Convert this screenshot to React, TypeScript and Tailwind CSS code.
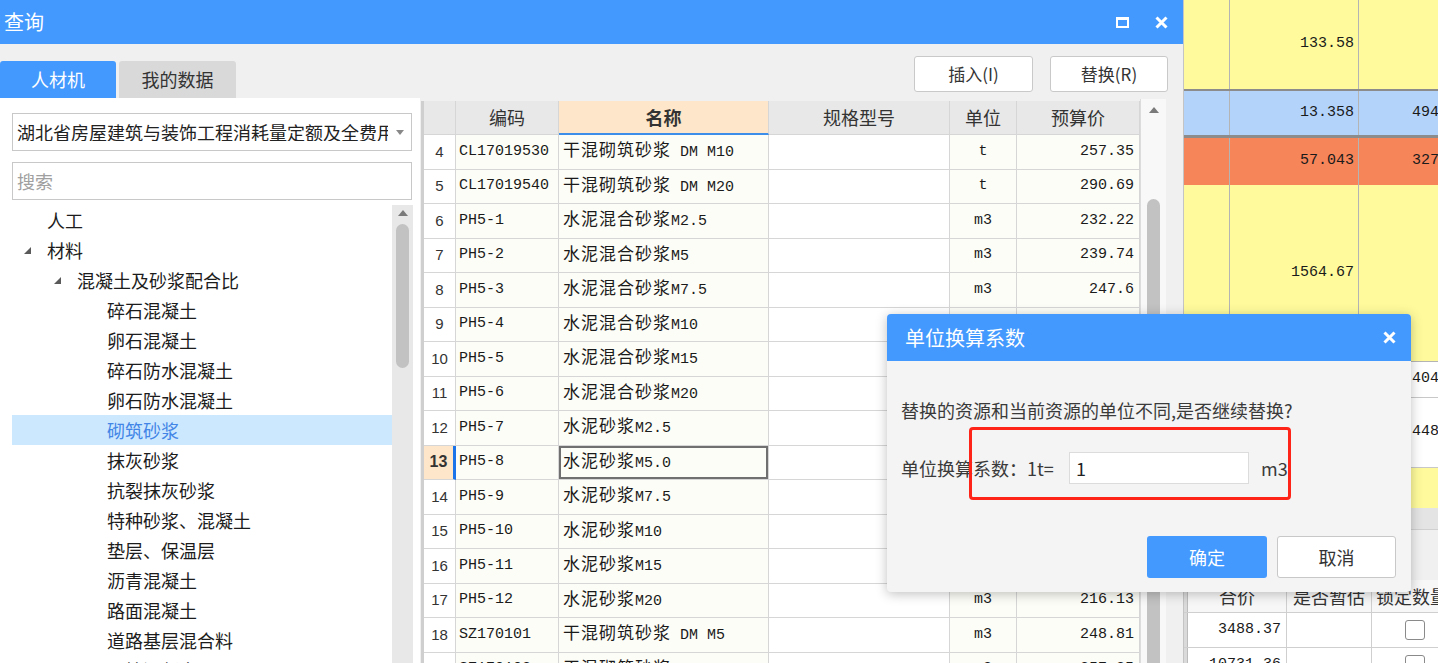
import React from 'react';

const rows: [number, string, string, string, string][] = [
    [4, 'CL17019530', '干混砌筑砂浆 DM M10', 't', '257.35'],
    [5, 'CL17019540', '干混砌筑砂浆 DM M20', 't', '290.69'],
    [6, 'PH5-1', '水泥混合砂浆M2.5', 'm3', '232.22'],
    [7, 'PH5-2', '水泥混合砂浆M5', 'm3', '239.74'],
    [8, 'PH5-3', '水泥混合砂浆M7.5', 'm3', '247.6'],
    [9, 'PH5-4', '水泥混合砂浆M10', 'm3', '256.41'],
    [10, 'PH5-5', '水泥混合砂浆M15', 'm3', '268.36'],
    [11, 'PH5-6', '水泥混合砂浆M20', 'm3', '281.63'],
    [12, 'PH5-7', '水泥砂浆M2.5', 'm3', '195.57'],
    [13, 'PH5-8', '水泥砂浆M5.0', 'm3', '199.15'],
    [14, 'PH5-9', '水泥砂浆M7.5', 'm3', '203.71'],
    [15, 'PH5-10', '水泥砂浆M10', 'm3', '208.47'],
    [16, 'PH5-11', '水泥砂浆M15', 'm3', '212.39'],
    [17, 'PH5-12', '水泥砂浆M20', 'm3', '216.13'],
    [18, 'SZ170101', '干混砌筑砂浆 DM M5', 'm3', '248.81'],
    [19, 'SZ170102', '干混砌筑砂浆 DM M10', 'm3', '257.35'],
];

const tree: { t: string; l: 0 | 1 | 2; open?: boolean; sel?: boolean }[] = [
    { t: '人工', l: 0 },
    { t: '材料', l: 0, open: true },
    { t: '混凝土及砂浆配合比', l: 1, open: true },
    { t: '碎石混凝土', l: 2 },
    { t: '卵石混凝土', l: 2 },
    { t: '碎石防水混凝土', l: 2 },
    { t: '卵石防水混凝土', l: 2 },
    { t: '砌筑砂浆', l: 2, sel: true },
    { t: '抹灰砂浆', l: 2 },
    { t: '抗裂抹灰砂浆', l: 2 },
    { t: '特种砂浆、混凝土', l: 2 },
    { t: '垫层、保温层', l: 2 },
    { t: '沥青混凝土', l: 2 },
    { t: '路面混凝土', l: 2 },
    { t: '道路基层混合料', l: 2 },
    { t: '预拌混凝土', l: 2 },
];

const indent = { 0: 'pl-[12px]', 1: 'pl-[42px]', 2: 'pl-[72px]' };

// SimSun-like cells: latin in mono, CJK runs slightly larger
function Mixed({ text }: { text: string }) {
    const parts = text.split(/([\u3000-\u9fff\uff00-\uffef]+)/);
    return (
        <span className="whitespace-pre">
            {parts.map((p, i) =>
                /[\u3000-\u9fff]/.test(p) ? (
                    <span key={i} className="text-[17px] tracking-[1px]">{p}</span>
                ) : (
                    <span key={i}>{p}</span>
                )
            )}
        </span>
    );
}

function CloseIcon() {
    return (
        <svg width="13" height="13" viewBox="0 0 13 13">
            <path d="M1.5 1.5L11.5 11.5M11.5 1.5L1.5 11.5" stroke="white" strokeWidth="3" />
        </svg>
    );
}

function Expander() {
    return (
        <svg width="7" height="7" viewBox="0 0 7 7">
            <polygon points="7,0 7,7 0,7" fill="#5a5a5a" />
        </svg>
    );
}

function UpArrow() {
    return (
        <svg width="10" height="6" viewBox="0 0 10 6">
            <polygon points="5,0 10,6 0,6" fill="#7a7a7a" />
        </svg>
    );
}

function LeftPanel() {
    return (
        <div className="w-[420px] shrink-0 bg-white flex flex-col pl-[12px] pt-[15px] min-h-0">
            <div className="w-[400px] h-[38px] border border-[#c8c8c8] flex items-center pl-[4px]">
                <span className="w-[371px] overflow-hidden whitespace-nowrap text-[18px] leading-none text-[#222]">
                    湖北省房屋建筑与装饰工程消耗量定额及全费用基价表
                </span>
                <svg width="8" height="5" viewBox="0 0 8 5" className="ml-[8px]">
                    <polygon points="0,0 8,0 4,5" fill="#888" />
                </svg>
            </div>
            <div className="mt-[11px] w-[400px] h-[38px] border border-[#c8c8c8] flex items-center pl-[4px]">
                <span className="text-[18px] leading-none text-[#a0a0a0]">搜索</span>
            </div>
            <div className="mt-[5px] w-[401px] flex flex-1 min-h-0">
                <div className="flex-1 flex flex-col overflow-hidden">
                    {tree.map((n) => (
                        <div
                            key={n.t}
                            className={`h-[30px] shrink-0 flex items-center ${indent[n.l]} ${n.sel ? 'bg-[#cce8ff] text-[#4285e6]' : 'text-[#1c1c1c]'}`}
                        >
                            <span className="w-[23px] flex items-center">{n.open && <Expander />}</span>
                            <span className="text-[18px] leading-none whitespace-nowrap">{n.t}</span>
                        </div>
                    ))}
                </div>
                <div className="w-[21px] bg-[#e8e8e8] flex flex-col items-center">
                    <div className="mt-[5px]"><UpArrow /></div>
                    <div className="mt-[8px] w-[13px] h-[144px] rounded-full bg-[#c2c2c2]" />
                </div>
            </div>
        </div>
    );
}

function DataTable() {
    const cell = 'border-r border-b border-[#d6d6d6] flex items-center';
    return (
        <div className="ml-[1px] mt-[3px] w-[719px] border-l-[3px] border-[#cfcfcf] flex flex-col overflow-hidden font-['Liberation_Mono','Noto_Sans_CJK_SC',monospace] text-[15px] text-[#1a1a1a]">
            <div className="flex h-[34px] shrink-0 bg-[#e8e8e8] font-['Noto_Sans_CJK_SC',sans-serif] text-[18px] text-[#333]">
                <div className={`${cell} w-[32px]`} />
                <div className={`${cell} w-[103px] justify-center`}>编码</div>
                <div className="w-[210px] border-r border-b-2 border-r-[#d6d6d6] border-b-[#3d8ee8] bg-[#fde6c9] flex items-center justify-center font-bold">名称</div>
                <div className={`${cell} w-[181px] justify-center`}>规格型号</div>
                <div className={`${cell} w-[67px] justify-center`}>单位</div>
                <div className={`${cell} w-[123px] justify-center`}>预算价</div>
            </div>
            {rows.map(([n, code, name, unit, price]) => {
                const sel = n === 13;
                return (
                    <div key={n} className="flex h-[34.5px] shrink-0">
                        <div
                            className={`${cell} w-[32px] justify-center font-['Liberation_Sans',sans-serif] text-[#333] ${sel ? 'bg-[#fde6c9] font-bold text-[16px] border-r-[3px] border-r-[#1a73e8]' : 'bg-white'}`}
                        >
                            {n}
                        </div>
                        <div className={`${cell} w-[103px] pl-[3px] bg-[#fdfdf7] whitespace-nowrap`}>{code}</div>
                        <div
                            className={`${cell} w-[210px] pl-[4px] bg-[#fdfdf7] whitespace-nowrap ${sel ? 'shadow-[inset_0_0_0_2px_#707070]' : ''}`}
                        >
                            <Mixed text={name} />
                        </div>
                        <div className={`${cell} w-[181px] bg-white`} />
                        <div className={`${cell} w-[67px] justify-center bg-[#fdfdf7]`}>{unit}</div>
                        <div className={`${cell} w-[123px] justify-end pr-[5px] bg-[#fdfdf7]`}>{price}</div>
                    </div>
                );
            })}
        </div>
    );
}

function QueryWindow() {
    return (
        <div className="w-[1184px] shrink-0 h-full flex flex-col bg-[#f0f0f0] border-r border-[#c4c4c4]">
            <div className="h-[44px] shrink-0 bg-[#4399fe] flex items-center justify-between pl-[4px] pr-[15px]">
                <span className="text-[20px] leading-none text-white">查询</span>
                <div className="flex items-center gap-[26px]">
                    <div className="w-[13px] h-[11px] border-2 border-t-[3px] border-white" />
                    <CloseIcon />
                </div>
            </div>
            <div className="h-[54px] shrink-0 flex justify-between">
                <div className="self-end flex gap-[3px]">
                    <div className="w-[116px] h-[37px] rounded-t-[3px] bg-[#4399fe] text-white text-[18px] flex items-center justify-center">
                        人材机
                    </div>
                    <div className="w-[117px] h-[37px] rounded-t-[3px] bg-[#d9d9d9] text-[#333] text-[18px] flex items-center justify-center">
                        我的数据
                    </div>
                </div>
                <div className="mt-[12px] mr-[15px] flex gap-[17px] h-[36px]">
                    <button className="w-[119px] h-[36px] bg-white border border-[#c9c9c9] rounded-[3px] text-[17px] text-[#333]">
                        插入(I)
                    </button>
                    <button className="w-[118px] h-[36px] bg-white border border-[#c9c9c9] rounded-[3px] text-[17px] text-[#333]">
                        替换(R)
                    </button>
                </div>
            </div>
            <div className="flex-1 flex min-h-0 overflow-hidden">
                <LeftPanel />
                <DataTable />
                <div className="mt-[1px] w-[26px] border-l border-[#dcdcdc] bg-[#f8f8f8] flex flex-col items-center">
                    <div className="mt-[8px]"><UpArrow /></div>
                    <div className="mt-[86px] w-[13px] flex-1 rounded-t-full bg-[#c2c2c2]" />
                </div>
            </div>
        </div>
    );
}

function BackgroundSheet() {
    const a = 'w-[46px] shrink-0 border-r border-[#b4b4b4]';
    const b = 'w-[129px] shrink-0 border-r border-[#b4b4b4] flex items-center justify-end pr-[4px]';
    const c = 'flex-1 flex items-center pl-[53px] whitespace-nowrap';
    return (
        <div className="flex-1 h-full flex flex-col overflow-hidden bg-white font-['Liberation_Mono',monospace] text-[15px] text-[#1a1a1a]">
            <div className="h-[89px] shrink-0 flex bg-[#fffb9c]">
                <div className={a} />
                <div className={b}>133.58</div>
                <div className={c} />
            </div>
            <div className="h-[2px] shrink-0 bg-[#8c8c8c]" />
            <div className="h-[44px] shrink-0 flex bg-[#b4d3fb]">
                <div className={a} />
                <div className={b}>13.358</div>
                <div className={c}>4946.70</div>
            </div>
            <div className="h-[3px] shrink-0 bg-[#8c8c8c]" />
            <div className="h-[47px] shrink-0 flex bg-[#f7855a]">
                <div className={a} />
                <div className={b}>57.043</div>
                <div className={c}>3275.16</div>
            </div>
            <div className="h-[177px] shrink-0 flex bg-[#fffb9c] border-b border-[#b4b4b4]">
                <div className={a} />
                <div className={b}>1564.67</div>
                <div className={c} />
            </div>
            <div className="h-[36px] shrink-0 flex border-b border-[#c8c8c8]">
                <div className={a} />
                <div className={b} />
                <div className={c}>4046.83</div>
            </div>
            <div className="h-[70px] shrink-0 flex border-b border-[#c8c8c8]">
                <div className={a} />
                <div className={b} />
                <div className={c}>4481.77</div>
            </div>
            <div className="h-[40px] shrink-0 flex bg-[#fffb9c]">
                <div className={a} />
                <div className={b} />
                <div className={c} />
            </div>
            <div className="h-[22px] shrink-0 bg-[#e4e4e4] border-b border-[#d0d0d0]" />
            <div className="h-[50px] shrink-0 bg-[#f0f0f0]" />
            <div className="h-[33px] shrink-0 flex bg-[#f7f7f7] border-b border-[#cfcfcf] font-['Noto_Sans_CJK_SC',sans-serif] text-[18px] text-[#333]">
                <div className="w-[4px] shrink-0 bg-[#dadada] border-r border-[#bcbcbc]" />
                <div className="w-[99px] shrink-0 border-r border-[#cfcfcf] flex items-center justify-center">合价</div>
                <div className="w-[85px] shrink-0 border-r border-[#cfcfcf] flex items-center justify-center whitespace-nowrap">是否暂估</div>
                <div className="flex-1 flex items-center pl-[4px] whitespace-nowrap">锁定数量</div>
            </div>
            {['3488.37', '10731.36'].map((v) => (
                <div key={v} className="h-[35px] shrink-0 flex border-b border-[#cfcfcf]">
                    <div className="w-[4px] shrink-0 bg-[#dadada] border-r border-[#bcbcbc]" />
                    <div className="w-[99px] shrink-0 border-r border-[#cfcfcf] flex items-center justify-end pr-[5px]">{v}</div>
                    <div className="w-[85px] shrink-0 border-r border-[#cfcfcf]" />
                    <div className="flex-1 flex items-center pl-[33px]">
                        <div className="w-[20px] h-[20px] rounded-[3px] border border-[#8a8a8a] bg-white" />
                    </div>
                </div>
            ))}
        </div>
    );
}

function UnitDialog() {
    return (
        <div className="absolute left-[887px] top-[314px] w-[524px] h-[278px] bg-[#f4f4f4] rounded-[4px] shadow-[0_2px_12px_rgba(0,0,0,0.25)] flex flex-col overflow-hidden">
            <div className="h-[47px] shrink-0 bg-[#4399fe] flex items-center justify-between pl-[18px] pr-[15px]">
                <span className="text-[20px] leading-none text-white">单位换算系数</span>
                <CloseIcon />
            </div>
            <div className="flex flex-col pl-[14px] pr-[15px]">
                <div className="mt-[36px] h-[26px] text-[18px] leading-[26px] text-[#3a3a3a] whitespace-nowrap">
                    替换的资源和当前资源的单位不同,是否继续替换?
                </div>
                <div className="mt-[29px] h-[32px] flex items-center text-[18px] text-[#3a3a3a]">
                    <span className="w-[168px] whitespace-nowrap">单位换算系数：1t=</span>
                    <div className="w-[180px] h-[32px] bg-white border border-[#dcdcdc] flex items-center pl-[6px] text-[#222]">1</div>
                    <span className="ml-[12px]">m3</span>
                </div>
                <div className="mt-[52px] flex justify-end gap-[10px]">
                    <button className="w-[120px] h-[42px] rounded-[3px] bg-[#4399fe] text-white text-[18px]">确定</button>
                    <button className="w-[119px] h-[42px] rounded-[3px] bg-white border border-[#c8c8c8] text-[#333] text-[18px]">取消</button>
                </div>
            </div>
        </div>
    );
}

export default function App() {
    return (
        <div className="relative w-[1438px] h-[663px] overflow-hidden flex bg-white font-['Noto_Sans_CJK_SC',sans-serif] text-[#333]">
            <QueryWindow />
            <BackgroundSheet />
            <UnitDialog />
            <div className="absolute left-[969px] top-[427px] w-[322px] h-[73px] border-[3px] border-[#ff2418] rounded-[4px]" />
        </div>
    );
}
